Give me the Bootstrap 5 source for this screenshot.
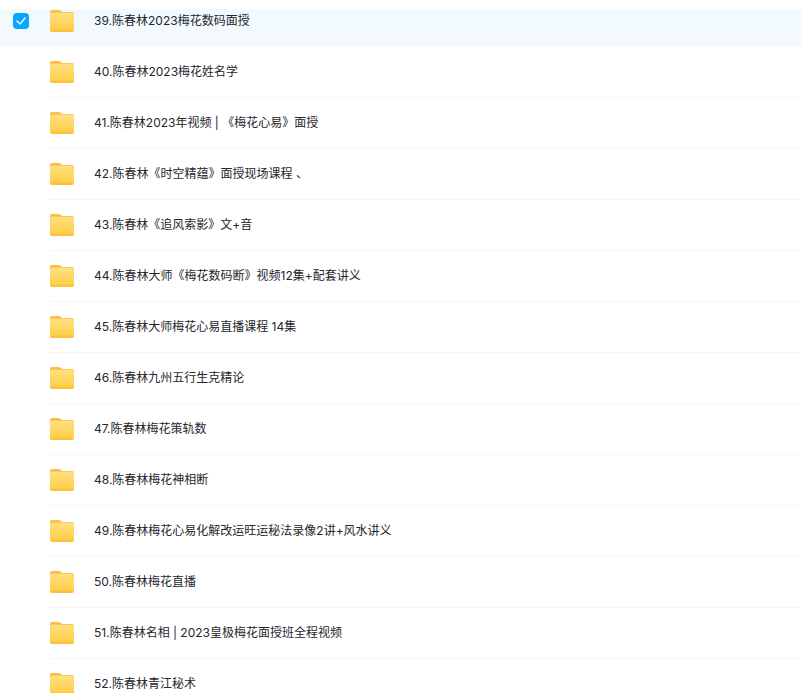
<!DOCTYPE html>
<html lang="zh-CN">
  <head>
    <meta charset="utf-8" />
    <meta name="viewport" content="width=device-width, initial-scale=1" />
    <title>文件列表</title>
    <link href="https://cdn.jsdelivr.net/npm/bootstrap@5.3.3/dist/css/bootstrap.min.css" rel="stylesheet" />
    <style>
      html, body { height: 100%; overflow: hidden; background: #fff; }
      .file-list { padding-top: 9px; font-family: Inter, "Noto Sans CJK SC", sans-serif; font-size: 12px; color: #25262b; }
      .file-row { height: 51px; }
      .file-row.selected { height: 37px; margin-bottom: 1px; padding-bottom: 13px; background: #f2faff; }
      .check-col { width: 50px; padding-left: 13px; flex: none; }
      .check-box { width: 16px; height: 16px; border-radius: 4px; background: #06a7ff; }
      .row-body { height: 100%; border-bottom: 1px solid #f5f5f6; }
      .selected .row-body { border-bottom: 0; }
      .folder-icon { width: 24px; height: 22px; margin-right: 20px; flex: none; }
    </style>
  </head>
  <body>
    <svg width="0" height="0" class="d-block">
      <defs>
        <linearGradient id="folderFront" x1="0" y1="0" x2="0" y2="1">
          <stop offset="0" stop-color="#ffe082" />
          <stop offset="1" stop-color="#ffcd3f" />
        </linearGradient>
        <symbol id="folder" viewBox="0 0 25 23" preserveAspectRatio="none">
          <path d="M2 0h7c1.2 0 1.900.6 2.700 1.400L13 2.200h10c1.100 0 2 .9 2 2V10H0V2C0 .9.900 0 2 0z" fill="#fbbf45" />
          <path d="M2 3h21c1.100 0 2 .9 2 2V21c0 1.100-.9 2-2 2H2c-1.100 0-2-.9-2-2V5c0-1.100.9-2 2-2z" fill="url(#folderFront)" />
          <path d="M0 21c0 1.100.9 2 2 2h21c1.100 0 2-.9 2-2v-.5H0z" fill="#fcc23f" />
        </symbol>
      </defs>
    </svg>
    <div class="file-list" id="list"></div>

    <script>
      const nombres = [
        "39.陈春林2023梅花数码面授",
        "40.陈春林2023梅花姓名学",
        "41.陈春林2023年视频 | 《梅花心易》面授",
        "42.陈春林《时空精蕴》面授现场课程 、",
        "43.陈春林《追风索影》文+音",
        "44.陈春林大师《梅花数码断》视频12集+配套讲义",
        "45.陈春林大师梅花心易直播课程 14集",
        "46.陈春林九州五行生克精论",
        "47.陈春林梅花策轨数",
        "48.陈春林梅花神相断",
        "49.陈春林梅花心易化解改运旺运秘法录像2讲+风水讲义",
        "50.陈春林梅花直播",
        "51.陈春林名相 | 2023皇极梅花面授班全程视频",
        "52.陈春林青江秘术"
      ];

      const check = `<div class="check-box d-flex align-items-center justify-content-center">
        <svg width="10" height="8" viewBox="0 0 10 8"><path d="M1 4l3 3 5-6" fill="none" stroke="#fff" stroke-width="1.300" stroke-linecap="round" stroke-linejoin="round"/></svg>
      </div>`;

      document.getElementById("list").innerHTML = nombres.map((nombre, i) => `
        <div class="file-row d-flex ${i === 0 ? "selected" : ""}">
          <div class="check-col d-flex align-items-center">${i === 0 ? check : ""}</div>
          <div class="row-body flex-grow-1 d-flex align-items-center">
            <svg class="folder-icon"><use href="#folder" /></svg>
            <span>${nombre}</span>
          </div>
        </div>`).join("");
    </script>
    <script src="https://cdn.jsdelivr.net/npm/bootstrap@5.3.3/dist/js/bootstrap.bundle.min.js"></script>
  </body>
</html>
